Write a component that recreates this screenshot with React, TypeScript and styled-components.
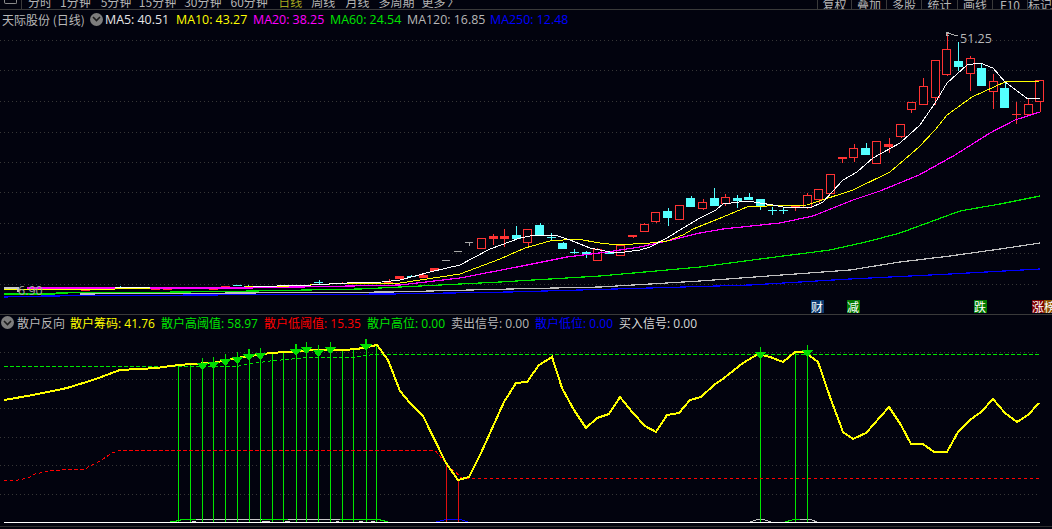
import React from "react";
import styled, { createGlobalStyle } from "styled-components";

const Global = createGlobalStyle`
  html, body { margin: 0; padding: 0; background: #02030e; overflow: hidden; }
  #root { width: 1052px; height: 529px; }
`;

const FONT = `"Open Sans", "Noto Sans CJK SC", sans-serif`;
const CJK = `"Noto Sans CJK SC", "Noto Sans", sans-serif`;

const Page = styled.div`
  width: 1052px;
  height: 529px;
  background: #02030e;
  display: flex;
  flex-direction: column;
  overflow: hidden;
  font-family: ${FONT};
`;

const Toolbar = styled.div`
  height: 9px;
  flex: none;
  display: flex;
  justify-content: space-between;
  align-items: flex-end;
  overflow: hidden;
  border-bottom: 1px solid #3a3a3a;
`;

const ToolGroup = styled.div`
  display: flex;
  align-items: flex-end;
  height: 9px;
`;

const CornerIcon = styled.div`
  width: 22px;
  height: 9px;
  flex: none;
  box-sizing: border-box;
  border-right: 1px solid #3a3a3a;
  padding-left: 4px;
`;

const CornerGlyph = styled.span`
  display: block;
  width: 11px;
  height: 3px;
  border: 1px solid #8a8a8a;
  border-top: 0;
  border-radius: 0 0 2px 2px;
`;

const PeriodTab = styled.span<{ $active?: boolean; $gap: number }>`
  font: 12px/14px ${CJK};
  color: ${(p) => (p.$active ? "#a5a51e" : "#b5b5b5")};
  margin-left: ${(p) => p.$gap}px;
  white-space: nowrap;
`;

const ToolButton = styled.span<{ $w: number }>`
  width: ${(p) => p.$w}px;
  height: 9px;
  box-sizing: border-box;
  border-left: 1px solid #3a3a3a;
  font: 12px/9px ${CJK};
  color: #b5b5b5;
  display: flex;
  justify-content: center;
  align-items: flex-end;
  white-space: nowrap;
  overflow: hidden;
  flex: none;
`;

const UpperPane = styled.section`
  position: relative;
  height: 304px;
  flex: none;
  display: flex;
  flex-direction: column;
  border-bottom: 1px solid #3a3a3a;
`;

const LowerPane = styled.section`
  flex: none;
  height: 211px;
  display: flex;
  flex-direction: column;
  border-bottom: 1px solid #2e2e2e;
`;

const LegendRow = styled.div<{ $h: number; $left: number; $size: number }>`
  height: ${(p) => p.$h}px;
  flex: none;
  padding-left: ${(p) => p.$left}px;
  display: flex;
  align-items: center;
  font-size: ${(p) => p.$size}px;
  white-space: nowrap;
`;

const Title = styled.span<{ $w: number }>`
  color: #b8b8b8;
  font-family: ${CJK};
  font-size: 12px;
  width: ${(p) => p.$w}px;
  flex: none;
`;

const Chevron = styled.span<{ $mr: number }>`
  width: 13px;
  height: 13px;
  border-radius: 50%;
  background: #7d7d7d;
  flex: none;
  margin-right: ${(p) => p.$mr}px;
  display: flex;
  align-items: center;
  justify-content: center;
`;

const Value = styled.span<{ $c: string; $w: number }>`
  color: ${(p) => p.$c};
  width: ${(p) => p.$w}px;
  flex: none;
`;

const Chart = styled.svg`
  display: block;
  flex: 1;
  width: 1052px;
  min-height: 0;
`;

const SignalTag = styled.span<{ $bg: string; $x: number; $w?: number }>`
  position: absolute;
  left: ${(p) => p.$x}px;
  top: 290px;
  width: ${(p) => p.$w ?? 13}px;
  height: 13px;
  background: ${(p) => p.$bg};
  color: #fff;
  font: 12px/13px ${CJK};
  text-align: left;
  overflow: hidden;
`;

type C = [number, number, number, number, number, 0 | 1];
// x, body top, body bottom, wick top, wick bottom, 0 red / 1 cyan
const candles: C[] = [
  [1039.5, 80, 101, 80, 112, 0], [1028, 104, 114, 99, 114, 0], [1016, 114, 114, 102, 124, 0],
  [1004.5, 88, 108, 82, 108, 1], [993, 81, 91, 74, 109, 0], [981, 68, 86, 63, 86, 1],
  [970, 58, 73, 56, 91, 0], [958, 61, 67, 42, 71, 1], [946.5, 49, 74, 32, 76, 0],
  [935, 60, 97, 60, 105, 0], [923, 86, 104, 78, 104, 0], [911, 102, 109, 102, 113, 0],
  [900.5, 124, 136, 124, 138, 0], [888.5, 144, 147, 138, 153, 0], [876.5, 141, 163, 141, 163, 0],
  [865.5, 148, 155, 143, 155, 1], [853.5, 148, 157, 144, 162, 0], [842, 157, 159, 157, 163, 0],
  [830, 174, 193, 174, 193, 0], [818.5, 189, 199, 189, 203, 0], [807, 195, 207, 193, 209, 0],
  [795, 205, 208, 205, 211, 0], [783, 210, 210, 207, 214, 1], [772, 210, 210, 207, 215, 1],
  [760, 199, 207, 199, 210, 1], [748.5, 197, 200, 193, 200, 1], [737, 198, 201, 195, 208, 1],
  [725, 197, 203, 194, 206, 0], [714, 198, 206, 188, 206, 1], [702.5, 202, 208, 199, 210, 0],
  [690.5, 198, 207, 196, 207, 1], [679.5, 205, 219, 205, 219, 0], [667.5, 211, 218, 208, 226, 1],
  [655.5, 212, 221, 212, 223, 0], [644, 224, 231, 223, 231, 0], [632.5, 235, 237, 235, 238, 0],
  [620.5, 245, 255, 245, 256, 0], [609, 252, 254, 252, 254, 1], [597, 249, 260, 248, 260, 0],
  [586, 252, 255, 251, 258, 1], [574, 252, 252, 249, 254, 1], [562.5, 243, 249, 242, 249, 1],
  [551, 237, 237, 233, 241, 1], [539.5, 225, 235, 223, 235, 1], [527.5, 229, 242, 229, 246, 0],
  [516, 235, 239, 226, 239, 1], [504, 236, 239, 229, 247, 0], [493, 236, 239, 234, 245, 0],
  [481.5, 238, 248, 238, 248, 0], [434.5, 268, 271, 268, 271, 0], [423, 275, 278, 273, 278, 0],
  [411, 276, 276, 275, 277, 1], [399.5, 276, 279, 276, 279, 0], [388.5, 282, 283, 279, 283, 0],
  [376.5, 285, 285, 285, 285, 0], [341.5, 283, 284, 282, 284, 0], [318.5, 282, 282, 280, 284, 1],
  [295, 285, 285, 285, 285, 1], [283.5, 285, 286, 285, 286, 0], [248, 286, 287, 285, 287, 1],
  [237.5, 285, 285, 285, 286, 1], [225.5, 286, 287, 286, 287, 0], [213, 289, 289, 289, 289, 0],
  [167.5, 289, 289, 289, 289, 0], [155, 289, 289, 289, 289, 0], [132.5, 287, 287, 287, 287, 1],
  [120, 287, 287, 286, 287, 1], [109.5, 287, 288, 287, 288, 0], [97.5, 288, 288, 288, 288, 0],
  [85.5, 290, 290, 290, 290, 0], [74.5, 288, 288, 288, 288, 1], [62.5, 288, 288, 288, 288, 0],
];
const greyTicks: [number, number, number][] = [[469, 242, 246], [458, 251, 251], [446, 260, 260]];

const ma5 = "115,287 150,287 253,287 277,286 312,285 347,283 382,282 400,280 430,272 460,265 490,249 520,238 535,235 555,235 570,240 590,248 610,252 625,252 640,250 650,247 667,238 683,228 700,218 716,210 723,204 747,201 773,205 783,207 810,208 823,202 843,180 857,172 873,158 900,143 920,125 935,103 947,83 967,65 980,63 993,68 1005,82 1028,99 1040,98";
const ma10 = "4,289 115,289 200,288 290,286 350,283 400,283 460,274 500,259 525,248 550,241 577,239 600,243 617,245 650,243 667,241 683,235 693,229 723,217 747,207 767,206 807,205 853,190 890,172 919,147 935,130 947,115 972,97 1005,82 1040,81";
const ma20 = "27,288 150,288 300,287 400,285 460,278 517,267 567,257 607,252 640,247 667,241 700,233 723,229 780,223 813,216 853,200 880,191 919,175 955,155 990,133 1015,120 1040,112";
const ma60 = "4,294 55,294 56,293 184,292 254,291 360,289 400,287 500,282 600,276 667,270 700,267 760,259 830,250 870,241 900,233 930,222 960,211 1000,204 1040,196";
const ma120 = "80,294 243,293 390,292 510,289 600,287 700,281 850,270 900,262 950,256 1000,249 1040,243";
const ma250 = "4,297 45,296 200,295 390,294 510,292 650,288 750,285 850,279 950,274 1040,269";

const gridUp = [40, 70, 101, 132, 162, 192, 223, 253, 284];
const gridDown = [352, 379, 408, 437, 465, 494];

const indicator = "4,400 33,395 67,388 93,380 120,370 157,368 170,366 190,364 213,363 237,358 270,353 287,352 313,350 343,350 357,349 377,345 388,360 400,391 410,403 423,416 446,463 458,480 469,477 481,453 504,402 516,383 527,382 539,365 552,357 562,388 574,410 586,428 597,418 609,414 620,397 633,413 645,426 656,432 667,415 679,413 690,400 701,397 714,385 724,378 743,363 758,354 770,357 783,362 795,352 805,352 818,362 830,397 843,432 853,439 866,433 889,407 901,425 911,444 923,444 934,452 947,452 958,432 970,420 981,412 993,399 1005,413 1017,422 1028,415 1039,403";
const highLine = "4,366.5 237,366.5 248,364 270,361 303,358 357,357 373,354.5 1040,354.5";
const lowLine = "4,481 18,480 28,478 35,474 50,471 70,469 85,469 90,466 100,461 112,453 120,450.5 435,450.5 446,463 462,478.5 1040,478.5";

const bars = [178, 190, 202, 213, 225, 237, 249, 260, 272, 283, 296, 306, 318, 330, 342, 353, 366, 376];
const bigBars = [760.5, 795.5, 807.5];
const topByX = (x: number): number => {
  const pts = indicator.split(" ").map((s) => s.split(",").map(Number));
  for (let i = 1; i < pts.length; i++) {
    if (x <= pts[i][0]) {
      const [a, b] = [pts[i - 1], pts[i]];
      return a[1] + ((b[1] - a[1]) * (x - a[0])) / (b[0] - a[0]);
    }
  }
  return 400;
};
const arrows: [number, number][] = [
  [202.5, 358], [213.5, 357], [225.5, 354], [237.5, 352], [249, 349], [260.5, 348],
  [296, 344], [306.5, 342], [318.5, 345], [330.5, 342], [366, 339], [760.5, 347], [807.5, 345],
];

const RED = "#ff3333";
const CYAN = "#54ffff";
const GREEN = "#00e600";

const Candle = ({ c }: { c: C }) => {
  const [x, t, b, wt, wb, kind] = c;
  const col = kind ? CYAN : RED;
  const flat = b - t <= 3;
  const left = Math.round(x - 4.5);
  const mid = Math.round(x);
  return (
    <g>
      <line x1={mid + 0.5} x2={mid + 0.5} y1={wt} y2={wb} stroke={col} />
      {t === b ? (
        <line x1={left} x2={left + 9} y1={t + 0.5} y2={t + 0.5} stroke={col} />
      ) : kind || flat ? (
        <rect x={left} y={t} width={9} height={b - t} fill={col} />
      ) : (
        <rect x={left + 0.5} y={t + 0.5} width={8} height={b - t} fill="#02030e" stroke={col} />
      )}
    </g>
  );
};

const ups: [string, string, number][] = [
  ["MA5: 40.51", "#e6e6e6", 71],
  ["MA10: 43.27", "#ffff00", 77],
  ["MA20: 38.25", "#ff00ff", 77],
  ["MA60: 24.54", "#00e600", 77],
  ["MA120: 16.85", "#b8b8b8", 83],
  ["MA250: 12.48", "#0000ff", 90],
];
const downs: [string, string, number][] = [
  ["散户筹码: 41.76", "#ffff00", 91],
  ["散户高阈值: 58.97", "#00e600", 103],
  ["散户低阈值: 15.35", "#ff0000", 103],
  ["散户高位: 0.00", "#00e600", 84],
  ["卖出信号: 0.00", "#b8b8b8", 84],
  ["散户低位: 0.00", "#0000ff", 84],
  ["买入信号: 0.00", "#d8d8d8", 84],
];
const periods: [string, number, boolean?][] = [
  ["分时", 6], ["1分钟", 8], ["5分钟", 10], ["15分钟", 7.5], ["30分钟", 8], ["60分钟", 9],
  ["日线", 10.5, true], ["周线", 9], ["月线", 10], ["多周期", 9], ["更多", 7], ["〉", 2],
];
const rightBtns: [string, number][] = [
  ["复权", 34], ["叠加", 35], ["多股", 35], ["统计", 36], ["画线", 35], ["F10", 35], ["标记", 25],
];

const ChevronMark = () => (
  <svg width="9" height="6" viewBox="0 0 9 6">
    <path d="M1 1 L4.5 4.5 L8 1" fill="none" stroke="#1c1c1c" strokeWidth="1.6" />
  </svg>
);

export default function App() {
  return (
    <Page>
      <Global />
      <Toolbar>
        <ToolGroup>
          <CornerIcon><CornerGlyph /></CornerIcon>
          {periods.map(([t, g, a]) => (
            <PeriodTab key={t} $gap={g} $active={a}>{t}</PeriodTab>
          ))}
        </ToolGroup>
        <ToolGroup>
          {rightBtns.map(([t, w]) => <ToolButton key={t} $w={w}>{t}</ToolButton>)}
        </ToolGroup>
      </Toolbar>

      <UpperPane>
        <LegendRow $h={18} $left={2} $size={12.4}>
          <Title $w={88}>天际股份 (日线)</Title>
          <Chevron $mr={2}><ChevronMark /></Chevron>
          {ups.map(([t, c, w]) => <Value key={t} $c={c} $w={w}>{t}</Value>)}
        </LegendRow>
        <Chart viewBox="0 28 1052 286" shapeRendering="crispEdges">
          {gridUp.map((y) => (
            <line key={y} x1={0} x2={1040} y1={y + 0.5} y2={y + 0.5} stroke="#363636" strokeDasharray="1 3" />
          ))}
          {candles.map((c) => <Candle key={c[0]} c={c} />)}
          {greyTicks.map(([x, y, w]) => (
            <g key={x} stroke="#a8a8a8">
              <line x1={x - 4} x2={x + 4} y1={y + 0.5} y2={y + 0.5} />
              <line x1={x + 0.5} x2={x + 0.5} y1={y} y2={w} />
            </g>
          ))}
          <polyline points={ma250} fill="none" stroke="#0000ff" strokeWidth="1.2" />
          <polyline points={ma120} fill="none" stroke="#c0c0c0" strokeWidth="1.2" />
          <polyline points={ma60} fill="none" stroke="#00e600" strokeWidth="1.2" />
          <polyline points={ma20} fill="none" stroke="#ff00ff" strokeWidth="1.2" />
          <polyline points={ma10} fill="none" stroke="#ffff00" />
          <polyline points={ma5} fill="none" stroke="#ffffff" />
          <polyline points="150,288 253,288" fill="none" stroke="#ff00ff" strokeWidth="1.2" />
          <polyline points="947,33 958,36" fill="none" stroke="#b0b0b0" />
          <path d="M949 32 H946.5 V35 H949" fill="none" stroke="#b0b0b0" />
          <text x="960" y="43" fontSize="12.5" fontFamily={FONT} fill="#b8b8b8" shapeRendering="auto">51.25</text>
          <path d="M1051 17 L1048 20 L1051 23" fill="none" stroke="#666" />
          <path d="M4 288 H18 V292" fill="none" stroke="#c8c8c8" strokeWidth="2" />
          <text x="18" y="295" fontSize="12.5" fontFamily={FONT} fill="#a8a8a8" shapeRendering="auto">6.90</text>
        </Chart>
        <SignalTag $bg="#0b3a70" $x={811}>财</SignalTag>
        <SignalTag $bg="#007a00" $x={847}>减</SignalTag>
        <SignalTag $bg="#007a00" $x={974}>跌</SignalTag>
        <SignalTag $bg="#7d0000" $x={1032}>涨</SignalTag>
        <SignalTag $bg="#8a5000" $x={1044} $w={8}>榜</SignalTag>
      </UpperPane>

      <LowerPane>
        <LegendRow $h={15} $left={1} $size={12}>
          <Chevron $mr={3}><ChevronMark /></Chevron>
          <Title $w={53}>散户反向</Title>
          {downs.map(([t, c, w]) => <Value key={t} $c={c} $w={w}>{t}</Value>)}
        </LegendRow>
        <Chart viewBox="0 330 1052 196" shapeRendering="crispEdges">
          {gridDown.map((y) => (
            <line key={y} x1={0} x2={1040} y1={y + 0.5} y2={y + 0.5} stroke="#363636" strokeDasharray="1 3" />
          ))}
          <path d="M170 521.5 H176 V520.5 H180 V519.5 H380 V520.5 H384 V521.5 H388" fill="none" stroke={GREEN} />
          <path d="M196 519.5 H262 M288 519.5 H340" fill="none" stroke="#c8c8c8" />
          <path d="M192 521.5 H196 M262 521.5 H270 M285 521.5 H290 M336 521.5 H339 M359 521.5 H363 M371 521.5 H375" fill="none" stroke="#d8d8d8" />
          <path d="M436 522 L444 520 L448 519 H456 L462 520 L468 522" fill="none" stroke="#0000ff" />
          <path d="M750 522 L756 520 L760 519 L765 520 L771 522" fill="none" stroke="#c0c0c0" />
          <path d="M785 522 L792 520 L800 519 H806" fill="none" stroke={GREEN} />
          <path d="M800 520 L806 519 L812 520 L817 522" fill="none" stroke="#c0c0c0" />
          {bars.map((x) => (
            <line key={x} x1={x + 0.5} x2={x + 0.5} y1={topByX(x)} y2={522} stroke={GREEN} />
          ))}
          {bigBars.map((x) => (
            <line key={x} x1={x} x2={x} y1={topByX(x)} y2={522} stroke={GREEN} />
          ))}
          <line x1={446.5} x2={446.5} y1={463} y2={522} stroke="#e01010" />
          <line x1={458.5} x2={458.5} y1={480} y2={522} stroke="#e01010" />
          <polyline points={highLine} fill="none" stroke={GREEN} strokeDasharray="3.5 2.5" />
          <polyline points={lowLine} fill="none" stroke="#ff0000" strokeDasharray="3.5 2.5" />
          <polyline points={indicator} fill="none" stroke="#ffff00" strokeWidth="2" />
          {arrows.map(([x, y]) => (
            <g key={x} fill="#00dd00" stroke="#00dd00">
              <line x1={x} x2={x} y1={y} y2={y + 8} strokeWidth="1.6" />
              <polygon points={`${x - 6},${y + 5} ${x + 6},${y + 5} ${x},${y + 12}`} stroke="none" />
            </g>
          ))}
          <line x1={4} x2={1040} y1={522.5} y2={522.5} stroke="#ffffff" />
        </Chart>
      </LowerPane>
    </Page>
  );
}
